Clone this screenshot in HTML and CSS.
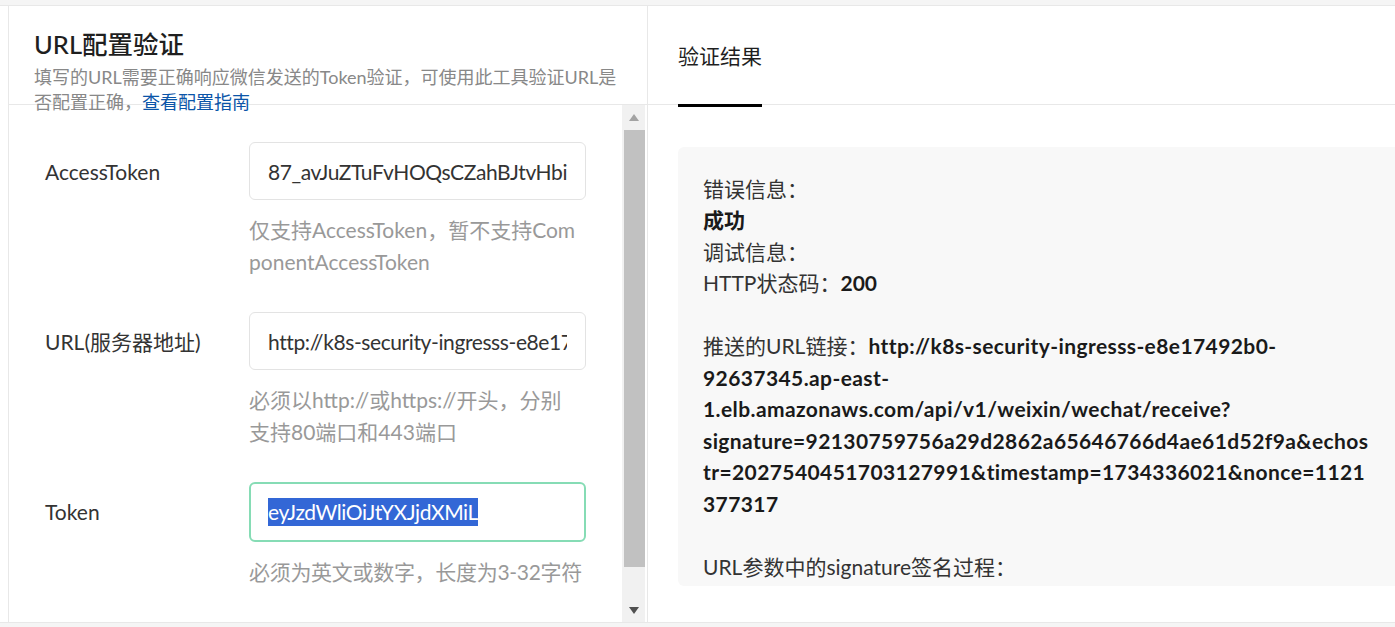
FILE: index.html
```html
<!DOCTYPE html>
<html lang="zh-CN">

<head>
  <meta charset="UTF-8">
  <meta name="viewport" content="width=device-width, initial-scale=1.0">
  <title>URL配置验证</title>
  <link rel="stylesheet" href="styles.css">
</head>

<body>
  <div class="page">
    <div class="panel panel-form">
      <div class="panel-head">
        <h1 class="title">URL配置验证</h1>
        <p class="desc">填写的URL需要正确响应微信发送的Token验证，可使用此工具验证URL是否配置正确，<a href="#">查看配置指南</a></p>
      </div>
      <div class="panel-body">
        <div class="form">
          <div class="row">
            <label class="label">AccessToken</label>
            <div class="field">
              <div class="input"><span>87_avJuZTuFvHOQsCZahBJtvHbi</span></div>
              <p class="help">仅支持AccessToken，暂不支持ComponentAccessToken</p>
            </div>
          </div>
          <div class="row">
            <label class="label">URL(服务器地址)</label>
            <div class="field">
              <div class="input"><span>http://k8s-security-ingresss-e8e17492b0-92637345.ap-east-1.elb.amazonaws.com/api/v1/weixin/wechat/receive</span></div>
              <p class="help">必须以http://或https://开头，分别<br>支持80端口和443端口</p>
            </div>
          </div>
          <div class="row">
            <label class="label">Token</label>
            <div class="field">
              <div class="input focused"><span><mark class="selected">eyJzdWliOiJtYXJjdXMiL</mark></span></div>
              <p class="help tight">必须为英文或数字，长度为3-32字符</p>
            </div>
          </div>
        </div>
        <div class="scrollbar">
          <span class="arrow arrow-up"></span>
          <span class="thumb"></span>
          <span class="arrow arrow-down"></span>
        </div>
      </div>
    </div>

    <div class="panel panel-result">
      <div class="tabs">
        <div class="tab active">验证结果</div>
      </div>
      <div class="result-body">
        <div class="result">
          错误信息：<br>
          <b>成功</b><br>
          调试信息：<br>
          HTTP状态码：<b>200</b><br>
          <br>
          推送的URL链接：<b class="url">http://k8s-security-ingresss-e8e17492b0-92637345.ap-east-1.elb.amazonaws.com/api/v1/weixin/wechat/receive?signature=92130759756a29d2862a65646766d4ae61d52f9a&amp;echostr=2027540451703127991&amp;timestamp=1734336021&amp;nonce=1121377317</b><br>
          <br>
          URL参数中的signature签名过程：
        </div>
      </div>
    </div>
  </div>
</body>

</html>
```

FILE: styles.css
```css
* {
  box-sizing: border-box;
}

:root {
  --line: #e8e8e8;
  --text: #333;
  --muted: #999;
}

body {
  margin: 0;
  padding-top: 5px;
  background-color: #f5f5f5;
  font-family: Lato, "Noto Sans CJK SC", sans-serif;
  color: var(--text);
}

.page {
  display: flex;
  height: 618px;
  background-color: #fff;
  border-top: 1px solid var(--line);
  border-bottom: 1px solid var(--line);
}

/* left: form */
.panel-form {
  width: 640px;
  margin-left: 8px;
  border-left: 1px solid var(--line);
  border-right: 1px solid var(--line);
  display: flex;
  flex-direction: column;
}

.panel-head {
  height: 99px;
  flex-shrink: 0;
  padding: 20px 25px 0;
  border-bottom: 1px solid var(--line);
}

.title {
  margin: 0;
  font-size: 25.5px;
  line-height: 36px;
  font-weight: 500;
  color: #1f1f1f;
}

.desc {
  margin: 3px 0 0;
  font-size: 18px;
  line-height: 24.5px;
  color: #888;
}

.desc a {
  color: #0b55a8;
  text-decoration: none;
}

.panel-body {
  flex: 1;
  min-height: 0;
  display: flex;
}

.form {
  flex: 1;
  min-width: 0;
  overflow: hidden;
  padding: 37px 36px 0;
}

.row {
  display: flex;
  align-items: flex-start;
  margin-bottom: 34px;
}

.label {
  width: 204px;
  flex-shrink: 0;
  font-size: 21px;
  line-height: 60px;
}

.field {
  flex: 1;
  min-width: 0;
}

.input {
  display: flex;
  align-items: center;
  height: 58px;
  padding: 0 18px;
  border: 1px solid #e3e3e3;
  border-radius: 6px;
  font-size: 21px;
  letter-spacing: -0.4px;
}

.input span {
  display: block;
  overflow: hidden;
  white-space: nowrap;
}

.input.focused {
  height: 60px;
  padding: 0 17px;
  border: 2px solid #86dcb5;
}

.selected {
  display: inline-block;
  line-height: 28px;
  background-color: #3367d6;
  color: #fff;
}

.help {
  margin: 14px 0 0;
  font-size: 21px;
  line-height: 32px;
  color: var(--muted);
  word-break: break-all;
}

.help.tight {
  letter-spacing: -0.3px;
}

.scrollbar {
  width: 23px;
  margin-right: 2px;
  background-color: #f1f1f1;
  display: flex;
  flex-direction: column;
  align-items: center;
}

.arrow {
  width: 0;
  height: 0;
  border-left: 5.5px solid transparent;
  border-right: 5.5px solid transparent;
}

.arrow-up {
  margin-top: 9px;
  border-bottom: 7px solid #a3a3a3;
}

.thumb {
  align-self: flex-end;
  width: 21px;
  height: 437px;
  margin-top: 9px;
  background-color: #c1c1c1;
}

.arrow-down {
  margin-top: 40px;
  border-top: 7px solid #505050;
}

/* right: result */
.panel-result {
  flex: 1;
  min-width: 0;
}

.tabs {
  display: flex;
  height: 99px;
  padding: 0 30px;
  border-bottom: 1px solid var(--line);
}

.tab {
  display: flex;
  align-items: center;
  height: 101px;
  font-size: 21px;
  color: #1f1f1f;
}

.tab.active {
  border-bottom: 3px solid #000;
}

.result-body {
  padding: 42px 0 0 30px;
}

.result {
  height: 439px;
  overflow: hidden;
  padding: 25.5px 25px 0;
  background-color: #f8f8f8;
  border-radius: 6px 0 0 6px;
  font-size: 21px;
  line-height: 31.5px;
  overflow-wrap: anywhere;
}

.result b {
  color: #1a1a1a;
}

.result .url {
  letter-spacing: 0.4px;
}
```
